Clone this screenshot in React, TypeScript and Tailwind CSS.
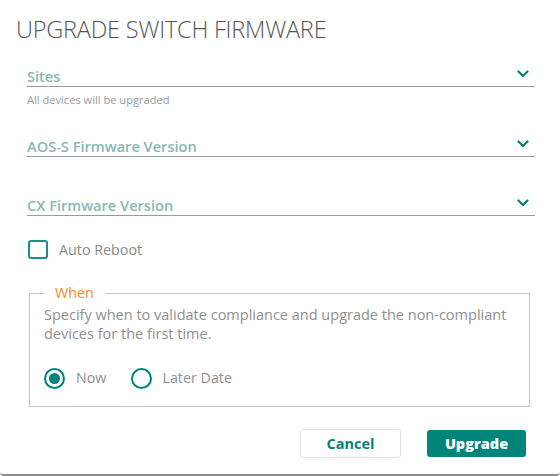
import React from "react";

function Chevron() {
  return (
    <svg width="12" height="8" viewBox="0 0 12 8" className="mb-[8px]">
      <path d="M1.5 1.5 L6 6 L10.5 1.5" fill="none" stroke="#01847a" strokeWidth="2.2" strokeLinecap="round" strokeLinejoin="round" />
    </svg>
  );
}

function Select({ label }: { label: string }) {
  return (
    <div className="flex items-end justify-between border-b border-[#9a9a9a] h-[22px] pr-[6px]">
      <span className="text-[14.6px] font-semibold text-[#86b8b5] leading-[20px]">{label}</span>
      <Chevron />
    </div>
  );
}

export default function App() {
  return (
    <div
      className="w-[560px] h-[476px] bg-white flex flex-col border-b-2 border-[#8f8f8f] rounded-b-[4px] overflow-hidden"
      style={{ fontFamily: '"Open Sans", sans-serif' }}
    >
      <h1 className="pl-[16px] pt-[13px] text-[23.5px] font-light text-[#555] leading-[32px] tracking-[-0.2px]">
        UPGRADE SWITCH FIRMWARE
      </h1>
      <div className="pl-[27px] pr-[25px] mt-[20px]">
        <Select label="Sites" />
        <div className="text-[11.1px] text-[#9a9a9a] mt-[6px] leading-[14px]">All devices will be upgraded</div>
        <div className="mt-[28px]">
          <Select label="AOS-S Firmware Version" />
        </div>
        <div className="mt-[37px]">
          <Select label="CX Firmware Version" />
        </div>
        <label className="flex items-center gap-[11px] mt-[23px] ml-[1px]">
          <span className="w-[20px] h-[19px] border-2 border-[#1a8f86] rounded-[3px] block" />
          <span className="text-[14.3px] text-[#8a8a8a]">Auto Reboot</span>
        </label>
        <fieldset className="mt-[24px] ml-[2px] mr-[5px] border border-[#c4c4c4] pl-[14px] pr-[8px] pb-[17px] pt-0">
          <legend className="ml-0 px-[11px] text-[14.3px] text-[#f68a1e] leading-[18px]">When</legend>
          <p className="text-[14.5px] text-[#8f8f8f] leading-[19px] mt-[3px]">
            Specify when to validate compliance and upgrade the non-compliant devices for the first time.
          </p>
          <div className="flex items-center mt-[24px]">
            <span className="w-[21px] h-[21px] rounded-full border-2 border-[#01847a] flex items-center justify-center">
              <span className="w-[11px] h-[11px] rounded-full bg-[#01847a] block" />
            </span>
            <span className="ml-[11px] text-[14.3px] text-[#8f8f8f]">Now</span>
            <span className="ml-[25px] w-[21px] h-[21px] rounded-full border-2 border-[#01847a] block" />
            <span className="ml-[10px] text-[14.3px] text-[#8f8f8f]">Later Date</span>
          </div>
        </fieldset>
        <div className="flex justify-end gap-[26px] mt-[22px] pr-[9px]">
          <button className="w-[101px] h-[29px] border border-[#e2e2e2] rounded-[3px] bg-white text-[14.5px] font-bold text-[#01847a]">
            Cancel
          </button>
          <button className="w-[99px] h-[27px] mt-[1px] rounded-[3px] bg-[#01847a] text-[14.5px] font-extrabold text-white">
            Upgrade
          </button>
        </div>
      </div>
    </div>
  );
}
